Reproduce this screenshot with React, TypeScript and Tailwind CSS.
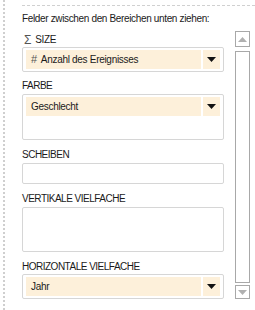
import React from "react";

const font = { fontFamily: '"Liberation Sans", Arial, sans-serif' };

function Caret() {
  return (
    <svg width="9" height="5" viewBox="0 0 9 5">
      <path d="M0 0 H9 L4.5 5 Z" fill="#111" />
    </svg>
  );
}

function Pill({ label, hash }: { label: string; hash?: boolean }) {
  return (
    <div className="flex h-[19px] gap-[2px]">
      <div className="flex flex-1 items-center whitespace-nowrap bg-[#fdf0da] pl-[5px] text-[10px] tracking-[-0.3px] text-[#1a1a1a]">
        {hash && <span className="mr-[4px] text-[11px] text-[#555]">#</span>}
        {label}
      </div>
      <div className="flex w-[17px] items-center justify-center bg-[#fdf0da]">
        <Caret />
      </div>
    </div>
  );
}

function Label({ children }: { children: React.ReactNode }) {
  return (
    <div className="whitespace-nowrap text-[10px] leading-[12px] tracking-[-0.5px] text-[#1a1a1a]">
      {children}
    </div>
  );
}

const box = "rounded-[2px] border border-[#d6d6d6]";
const pad = "pt-[2px] pb-[2px] pl-[3px] pr-[3px]";

export default function App() {
  return (
    <div className="flex h-[310px] w-[255px] bg-white" style={font}>
      <div className="ml-[3px] h-full border-l-2 border-dotted border-[#cfcfcf]" />
      <div className="ml-[17px] flex flex-1 flex-col pt-[5px]">
        <div className="border-t border-dashed border-[#d0d0d0]" />
        <div className="flex">
          <div className="flex w-[202px] flex-col">
            <div className="mt-[6px] whitespace-nowrap text-[10px] leading-[13px] tracking-[-0.35px] text-[#1a1a1a]">
              Felder zwischen den Bereichen unten ziehen:
            </div>
            <div className="mt-[9px] flex h-[12px] items-center pl-[2px] text-[10px] leading-[12px] tracking-[-0.3px] text-[#1a1a1a]">
              <span className="mr-[4px] text-[12px] leading-[12px] text-[#555]">Σ</span>SIZE
            </div>
            <div className={`mt-[1px] ${box} ${pad}`}>
              <Pill label="Anzahl des Ereignisses" hash />
            </div>
            <div className="mt-[8px]">
              <Label>FARBE</Label>
            </div>
            <div className={`mt-[2px] h-[46px] ${box} ${pad}`}>
              <Pill label="Geschlecht" />
            </div>
            <div className="mt-[9px]">
              <Label>SCHEIBEN</Label>
            </div>
            <div className={`mt-[2px] h-[21px] ${box}`} />
            <div className="mt-[9px]">
              <Label>VERTIKALE VIELFACHE</Label>
            </div>
            <div className={`mt-[2px] h-[45px] ${box}`} />
            <div className="mt-[9px]">
              <Label>HORIZONTALE VIELFACHE</Label>
            </div>
            <div className={`mt-[1px] ${box} ${pad}`}>
              <Pill label="Jahr" />
            </div>
          </div>
          <div className="ml-[11px] mt-[25px] flex w-[15px] flex-col">
            <div className="flex h-[16px] items-center justify-center border border-[#a8a8a8]">
              <svg width="9" height="5" viewBox="0 0 9 5">
                <path d="M4.5 0 L9 5 H0 Z" fill="#b0b0b0" />
              </svg>
            </div>
            <div className="mt-[4px] h-[232px] border border-[#a8a8a8]" />
            <div className="mt-[2px] flex h-[14px] items-center justify-center border border-[#a8a8a8]">
              <svg width="9" height="5" viewBox="0 0 9 5">
                <path d="M0 0 H9 L4.5 5 Z" fill="#b0b0b0" />
              </svg>
            </div>
          </div>
        </div>
      </div>
    </div>
  );
}
